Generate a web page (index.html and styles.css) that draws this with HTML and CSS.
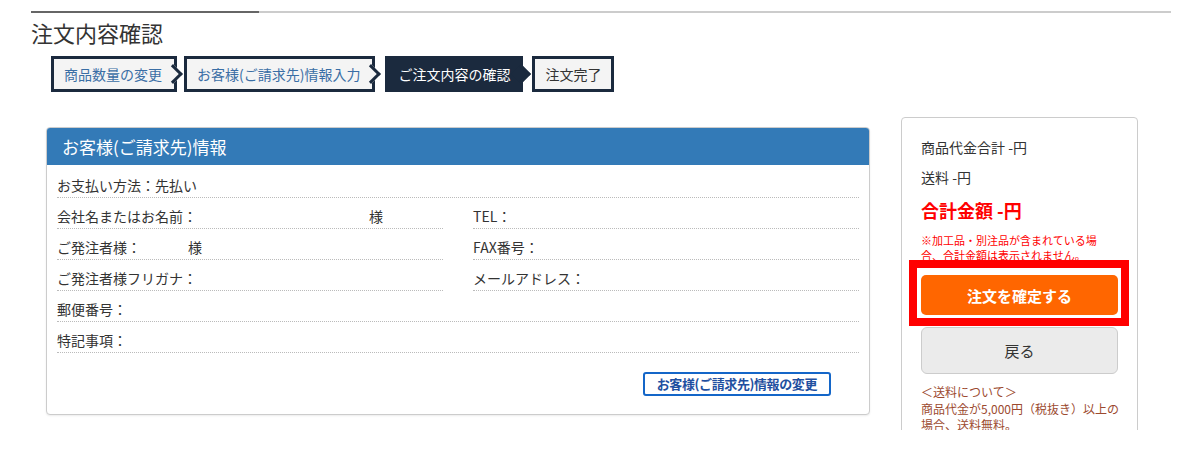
FILE: index.html
```html
<!DOCTYPE html>
<html lang="ja">
<head>
    <meta charset="UTF-8">
    <meta name="viewport" content="width=device-width, initial-scale=1.0">
    <title>注文内容確認</title>
    <link rel="stylesheet" href="styles.css">
</head>
<body>

<div class="page">
    <div class="top-rule">
        <span class="rule-done"></span>
        <span class="rule-rest"></span>
    </div>
    <h1 class="page-title">注文内容確認</h1>

    <ol class="steps">
        <li class="step step-done">商品数量の変更</li>
        <li class="step step-done">お客様(ご請求先)情報入力</li>
        <li class="step step-current">ご注文内容の確認</li>
        <li class="step step-last">注文完了</li>
    </ol>

    <div class="content">
        <section class="panel">
            <div class="panel-head">お客様(ご請求先)情報</div>
            <div class="panel-body">
                <div class="info-row">お支払い方法：先払い</div>
                <div class="info-grid">
                    <div class="info-row">会社名またはお名前：<span class="blank blank-name"></span>様</div>
                    <div class="info-row">TEL：</div>
                    <div class="info-row">ご発注者様：<span class="blank blank-orderer"></span>様</div>
                    <div class="info-row">FAX番号：</div>
                    <div class="info-row">ご発注者様フリガナ：</div>
                    <div class="info-row">メールアドレス：</div>
                </div>
                <div class="info-row">郵便番号：</div>
                <div class="info-row">特記事項：</div>
                <div class="panel-actions">
                    <button class="btn-edit">お客様(ご請求先)情報の変更</button>
                </div>
            </div>
        </section>

        <aside class="summary-clip">
            <div class="summary">
                <p class="sum-line">商品代金合計 -円</p>
                <p class="sum-line sum-gap">送料 -円</p>
                <p class="sum-total">合計金額 -円</p>
                <p class="sum-note">※加工品・別注品が含まれている場合、合計金額は表示されません。</p>
                <div class="confirm-wrap">
                    <button class="btn-confirm">注文を確定する</button>
                </div>
                <button class="btn-back">戻る</button>
                <p class="shipping">＜送料について＞<br>商品代金が5,000円（税抜き）以上の<br>場合、送料無料。</p>
            </div>
        </aside>
    </div>
</div>

</body>
</html>
```

FILE: styles.css
```css
body {
    margin: 0;
    background-color: #fff;
    color: #333;
    font-family: "Noto Sans CJK JP", "Noto Sans", sans-serif;
}

p {
    margin: 0;
}

.page {
    width: 1140px;
    padding: 11px 31px 0;
}

/* top rule: dark part + light part */
.top-rule {
    display: flex;
    height: 2px;
}

.rule-done {
    width: 228px;
    background-color: #666;
}

.rule-rest {
    flex: 1;
    background-color: #ccc;
}

.page-title {
    margin: 4px 0 0;
    font-size: 22px;
    font-weight: normal;
    line-height: 30px;
    color: #333;
}

/* steps */
.steps {
    display: flex;
    gap: 7px;
    margin: 9px 0 0 20px;
    padding: 0;
    list-style: none;
}

.step {
    position: relative;
    height: 30px;
    padding: 0 10px;
    border: 3px solid #1b2a3e;
    background-color: #f4f4f4;
    font-size: 14px;
    line-height: 30px;
    color: #333;
}

.step-done {
    padding-right: 12px;
    color: #3a6ea5;
}

.step-done::after,
.step-current::after {
    content: "";
    position: absolute;
    top: 50%;
    right: -6px;
    width: 14px;
    height: 14px;
    box-sizing: border-box;
    border-top: 3px solid #1b2a3e;
    border-right: 3px solid #1b2a3e;
    background-color: #f4f4f4;
    transform: translateY(-50%) rotate(45deg);
}

.step-current {
    margin-left: 3px;
    background-color: #1b2a3e;
    color: #fff;
}

.step-current::after {
    right: -8px;
    background-color: #1b2a3e;
}

.step-last {
    margin-left: 2px;
}

/* main area */
.content {
    display: flex;
    align-items: flex-start;
    gap: 31px;
    margin: 25px 0 0 15px;
}

.panel {
    width: 822px;
    margin-top: 10px;
    border: 1px solid #ccc;
    border-radius: 4px;
    box-shadow: 0 1px 2px rgba(0, 0, 0, 0.08);
    background-color: #fff;
}

.panel-head {
    height: 37px;
    padding-left: 15px;
    border-radius: 3px 3px 0 0;
    background-color: #337ab7;
    color: #fff;
    font-size: 17px;
    line-height: 37px;
}

.panel-body {
    padding: 2px 10px 18px;
}

.info-grid {
    display: grid;
    grid-template-columns: 1fr 1fr;
    column-gap: 30px;
}

.info-row {
    display: flex;
    padding: 8px 0 2px;
    border-bottom: 1px dotted #bbb;
    font-size: 14px;
    line-height: 20px;
    color: #333;
}

.blank {
    display: inline-block;
}

.blank-name {
    width: 172px;
}

.blank-orderer {
    width: 47px;
}

.panel-actions {
    display: flex;
    justify-content: flex-end;
    margin-top: 19px;
    padding-right: 28px;
}

.btn-edit {
    height: 24px;
    padding: 0 12px;
    border: 2px solid #1466c8;
    border-radius: 3px;
    background-color: #fff;
    color: #1f4fa0;
    font-family: inherit;
    font-size: 13px;
    font-weight: bold;
    letter-spacing: -0.4px;
    line-height: 20px;
    cursor: pointer;
}

/* summary sidebar */
.summary-clip {
    width: 237px;
    height: 313px;
    overflow: hidden;
}

.summary {
    padding: 19px 19px 20px;
    border: 1px solid #ccc;
    border-radius: 4px;
    background-color: #fff;
}

.sum-line {
    font-size: 14px;
    line-height: 20px;
    color: #333;
}

.sum-gap {
    margin-top: 10px;
}

.sum-total {
    margin-top: 11px;
    font-size: 18px;
    font-weight: bold;
    line-height: 24px;
    color: #ff0000;
}

.sum-note {
    max-width: 182px;
    margin-top: 11px;
    font-size: 11px;
    line-height: 15px;
    color: #ff0000;
}

.confirm-wrap {
    position: relative;
    margin-top: 12px;
}

/* red highlight frame drawn over the button */
.confirm-wrap::after {
    content: "";
    position: absolute;
    top: -15px;
    left: -12px;
    right: -11px;
    bottom: -11px;
    border: 8px solid #ff0000;
    pointer-events: none;
}

.btn-confirm {
    display: block;
    width: 100%;
    height: 40px;
    border: none;
    border-radius: 5px;
    background-color: #ff6600;
    color: #fff;
    font-family: inherit;
    font-size: 15px;
    font-weight: bold;
    cursor: pointer;
}

.btn-back {
    display: block;
    width: 100%;
    height: 47px;
    margin-top: 12px;
    border: 1px solid #ccc;
    border-radius: 6px;
    background-color: #ebebeb;
    color: #333;
    font-family: inherit;
    font-size: 15px;
    cursor: pointer;
}

.shipping {
    margin: 10px -16px 0 0;
    font-size: 12px;
    line-height: 16.5px;
    color: #9c4a2f;
}
```
